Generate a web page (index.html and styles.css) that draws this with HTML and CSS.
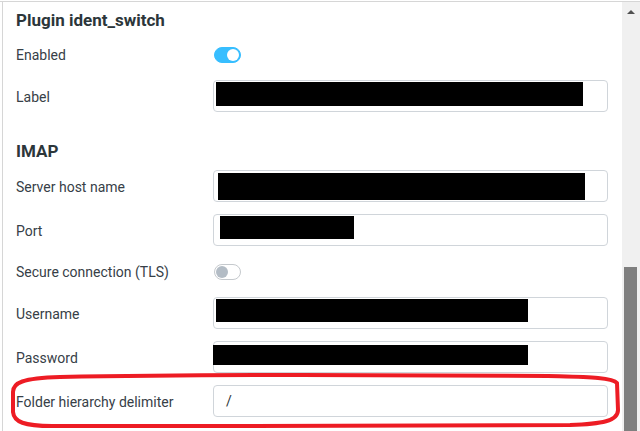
FILE: index.html
```html
<!DOCTYPE html>
<html lang="en">
<head>
    <meta charset="UTF-8" />
    <title>Identity settings</title>
    <link rel="stylesheet" href="styles.css">
</head>
<body>
    <div class="frame">
        <div class="panel">
            <div class="content">
                <h2 class="section-title first">Plugin ident_switch</h2>
                <div class="row row-switch">
                    <span class="label">Enabled</span>
                    <span class="switch on"><span class="knob"></span></span>
                </div>
                <div class="row">
                    <span class="label">Label</span>
                    <div class="field"><span class="redact redact-label"></span></div>
                </div>

                <h2 class="section-title">IMAP</h2>
                <div class="row">
                    <span class="label">Server host name</span>
                    <div class="field"><span class="redact redact-host"></span></div>
                </div>
                <div class="row">
                    <span class="label">Port</span>
                    <div class="field"><span class="redact redact-port"></span></div>
                </div>
                <div class="row row-switch">
                    <span class="label">Secure connection (TLS)</span>
                    <span class="switch"><span class="knob"></span></span>
                </div>
                <div class="row">
                    <span class="label">Username</span>
                    <div class="field"><span class="redact redact-user"></span></div>
                </div>
                <div class="row">
                    <span class="label">Password</span>
                    <div class="field"><span class="redact redact-pass"></span></div>
                </div>
                <div class="row">
                    <span class="label">Folder hierarchy delimiter</span>
                    <div class="field"><span class="value">/</span></div>
                </div>
            </div>
            <div class="scrollbar">
                <span class="arrow"></span>
                <span class="thumb"></span>
            </div>
        </div>
    </div>

    <!-- hand drawn highlight round the delimiter row -->
    <svg class="marker" width="640" height="431" viewBox="0 0 640 431">
        <path d="M60 377 C110 376 200 375 300 375 L548 376 C585 377 612 377 617 383 L618 410 C618 421 602 424 570 425 L250 426 L52 426 C24 426 14 422 13 412 L13 392 C13 383 22 378 60 377 Z"
              fill="none" stroke="#ed1c24" stroke-width="4" stroke-linejoin="round" />
    </svg>
</body>
</html>
```

FILE: styles.css
```css
body {
    margin: 0;
    font-family: Roboto, "Liberation Sans", Arial, sans-serif;
    color: #374047;
    background: #fff;
    width: 640px;
    height: 431px;
    overflow: hidden;
    position: relative;
}
.frame {
    margin-top: 1px;
    border-top: 1px solid #d6d6d6;
    height: 429px;
}
.panel {
    margin-left: 2px;
    border-left: 1px solid #d6d6d6;
    height: 429px;
    display: flex;
}
.content {
    flex: 1;
    padding: 8px 14px 0 13px;
}
.section-title {
    margin: 29px 0 9px 0;
    font-size: 17px;
    line-height: 20px;
    font-weight: bold;
    color: #2c363a;
}
.section-title.first {
    margin-top: 0;
    margin-bottom: 11px;
}
.row {
    display: flex;
    align-items: center;
    height: 32px;
    margin-bottom: 12px;
}
.row-switch {
    height: 27px;
}
.label {
    width: 197px;
    font-size: 14px;
    color: #374047;
    padding-top: 1px;
}
.field {
    position: relative;
    box-sizing: border-box;
    width: 395px;
    height: 32px;
    border: 1px solid #d0d5da;
    border-radius: 4px;
    background: #fff;
    display: flex;
    align-items: center;
    padding-left: 12px;
}
.value {
    font-size: 14px;
    color: #2c363a;
}
.redact {
    position: absolute;
    background: #000;
}
.redact-label { left: 2px;  top: 1px; width: 367px; height: 24px; }
.redact-host  { left: 4px;  top: 2px; width: 367px; height: 27px; }
.redact-port  { left: 6px;  top: 1px; width: 134px; height: 23px; }
.redact-user  { left: 2px;  top: 1px; width: 312px; height: 23px; }
.redact-pass  { left: -1px; top: 3px; width: 315px; height: 20px; }
.switch {
    box-sizing: border-box;
    width: 27px;
    height: 16px;
    margin-left: 1px;
    border-radius: 8px;
    border: 1px solid #c5c9cd;
    background: #fff;
    display: flex;
    align-items: center;
    padding: 0 1px;
}
.switch .knob {
    width: 12px;
    height: 12px;
    border-radius: 50%;
    background: #b3bcc5;
}
.switch.on {
    background: #37beff;
    border-color: #37beff;
    justify-content: flex-end;
}
.switch.on .knob {
    background: #fff;
}
.scrollbar {
    width: 18px;
    background: #f0f0f0;
    display: flex;
    flex-direction: column;
    align-items: flex-start;
}
.arrow {
    margin: 8px 0 0 5px;
    width: 0;
    height: 0;
    border-left: 4px solid transparent;
    border-right: 4px solid transparent;
    border-bottom: 4px solid #505050;
}
.thumb {
    margin: 253px 0 0 2px;
    width: 13px;
    flex: 1;
    background: #7f7f7f;
}
.marker {
    position: absolute;
    left: 0;
    top: 0;
    pointer-events: none;
}
```
